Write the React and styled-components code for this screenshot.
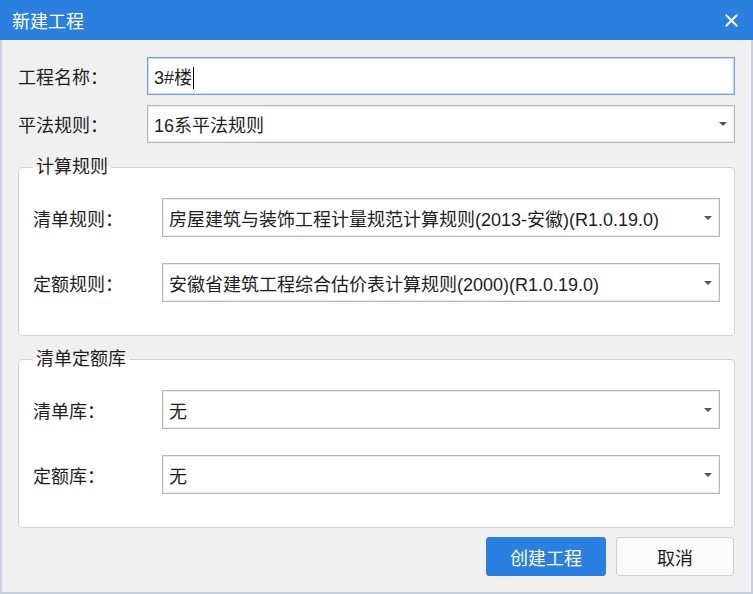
import styled, { createGlobalStyle } from "styled-components";

const GlobalStyle = createGlobalStyle`
  html, body {
    margin: 0;
    padding: 0;
    background: #fff;
  }
  * {
    box-sizing: border-box;
  }
`;

const FONT = `"Liberation Sans", "Noto Sans CJK SC", sans-serif`;

const Dialog = styled.div`
  width: 753px;
  height: 594px;
  display: flex;
  flex-direction: column;
  background: #f0f0f0;
  border: 2px solid #c7d0dc;
  border-top: none;
  font-family: ${FONT};
  font-size: 18px;
  color: #1e1e1e;
`;

const TitleBar = styled.div`
  height: 40px;
  margin: 0 -2px;
  flex-shrink: 0;
  display: flex;
  align-items: center;
  justify-content: space-between;
  padding: 0 15px 0 12px;
  background: #2b7fde;
  color: #fff;
  font-size: 18px;
`;

const CloseButton = styled.button`
  width: 14px;
  height: 14px;
  padding: 0;
  border: none;
  background: transparent;
  display: flex;
  align-items: center;
  justify-content: center;
  cursor: pointer;
`;

const Body = styled.div`
  flex: 1;
  display: flex;
  flex-direction: column;
  padding: 17px 16px 0 16px;
`;

const FormRow = styled.div`
  display: flex;
  align-items: center;
  margin-bottom: ${(p) => p.$gap || 0}px;
`;

const Label = styled.label`
  width: 129px;
  flex-shrink: 0;
  white-space: nowrap;
`;

const Field = styled.div`
  flex: 1;
  height: ${(p) => p.$h || 38}px;
  display: flex;
  align-items: center;
  justify-content: space-between;
  padding: 0 7px 0 6px;
  background: #fff;
  border: 1px solid ${(p) => (p.$focused ? "#6f9fe6" : "#b8b8b8")};
  box-shadow: inset 0 0 0 1px ${(p) => (p.$focused ? "#c9dbf6" : "#ececec")};
  white-space: nowrap;
  overflow: hidden;
`;

const Caret = styled.span`
  display: inline-block;
  width: 1px;
  height: 22px;
  margin-left: 1px;
  vertical-align: -5px;
  background: #000;
`;

const Arrow = styled.span`
  width: 0;
  height: 0;
  flex-shrink: 0;
  border-left: 4px solid transparent;
  border-right: 4px solid transparent;
  border-top: 4px solid #555;
`;

const Group = styled.fieldset`
  margin: ${(p) => p.$top}px 0 0 0;
  padding: 21px 14px 33px 14px;
  border: 1px solid #d2d2d2;
  border-radius: 4px;
  background: #fff;
  min-width: 0;
`;

const Legend = styled.legend`
  margin-left: 0;
  padding: 0 3px;
  line-height: 20px;
  font-size: 18px;
`;

const Footer = styled.div`
  display: flex;
  justify-content: flex-end;
  gap: 10px;
  margin-top: 9px;
  padding-right: 1px;
`;

const Button = styled.button`
  width: ${(p) => (p.$primary ? 120 : 118)}px;
  height: 39px;
  border-radius: 3px;
  font-family: ${FONT};
  font-size: 18px;
  cursor: pointer;
  border: 1px solid ${(p) => (p.$primary ? "#2b7fde" : "#cfcfcf")};
  background: ${(p) => (p.$primary ? "#2b7fde" : "#fafafa")};
  color: ${(p) => (p.$primary ? "#fff" : "#1e1e1e")};
`;

const Select = ({ value, h }) => (
  <Field $h={h}>
    <span>{value}</span>
    <Arrow />
  </Field>
);

const App = () => {
  return (
    <>
      <GlobalStyle />
      <Dialog>
        <TitleBar>
          <span>新建工程</span>
          <CloseButton aria-label="关闭">
            <svg width="13" height="13" viewBox="0 0 13 13">
              <path
                d="M1.5 1.5 L11.5 11.5 M11.5 1.5 L1.5 11.5"
                stroke="#fff"
                strokeWidth="2"
                strokeLinecap="square"
              />
            </svg>
          </CloseButton>
        </TitleBar>

        <Body>
          <FormRow $gap={10}>
            <Label>工程名称：</Label>
            <Field $focused>
              <span>
                3#楼
                <Caret />
              </span>
            </Field>
          </FormRow>
          <FormRow>
            <Label>平法规则：</Label>
            <Select value="16系平法规则" />
          </FormRow>

          <Group $top={14}>
            <Legend>计算规则</Legend>
            <FormRow $gap={26}>
              <Label>清单规则：</Label>
              <Select h={39} value="房屋建筑与装饰工程计量规范计算规则(2013-安徽)(R1.0.19.0)" />
            </FormRow>
            <FormRow>
              <Label>定额规则：</Label>
              <Select h={39} value="安徽省建筑工程综合估价表计算规则(2000)(R1.0.19.0)" />
            </FormRow>
          </Group>

          <Group $top={13}>
            <Legend>清单定额库</Legend>
            <FormRow $gap={26}>
              <Label>清单库：</Label>
              <Select h={39} value="无" />
            </FormRow>
            <FormRow>
              <Label>定额库：</Label>
              <Select h={39} value="无" />
            </FormRow>
          </Group>

          <Footer>
            <Button $primary>创建工程</Button>
            <Button>取消</Button>
          </Footer>
        </Body>
      </Dialog>
    </>
  );
};

export default App;
